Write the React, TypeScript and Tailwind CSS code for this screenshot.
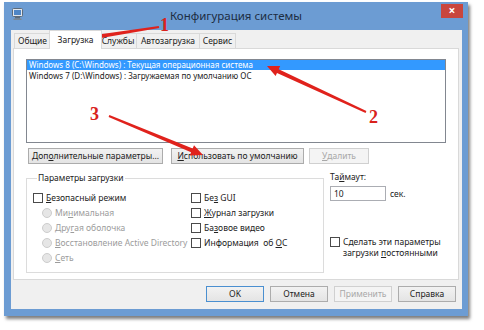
import React from "react";

const ui = { fontFamily: '"Noto Sans", "Liberation Sans", sans-serif' };

function U({ children }: { children: React.ReactNode }) {
  return <span className="underline underline-offset-1">{children}</span>;
}

function Button({
  children,
  className = "",
  disabled = false,
  primary = false,
}: {
  children: React.ReactNode;
  className?: string;
  disabled?: boolean;
  primary?: boolean;
}) {
  const tone = disabled
    ? "border-[#d0d0d0] bg-[#f4f4f4] text-[#a8a8a8]"
    : primary
      ? "border-[#4a8fd0] bg-gradient-to-b from-[#f2f2f2] to-[#e4e4e4] text-[#222]"
      : "border-[#acacac] bg-gradient-to-b from-[#f2f2f2] to-[#e4e4e4] text-[#222]";
  return (
    <div className={`flex h-[16px] shrink-0 items-center justify-center border ${tone} ${className}`}>
      {children}
    </div>
  );
}

function Check({ children }: { children: React.ReactNode }) {
  return (
    <div className="flex h-[15px] items-center gap-[3px]">
      <span className="h-[10px] w-[10px] shrink-0 border border-[#4a4a4a] bg-white" />
      <span>{children}</span>
    </div>
  );
}

function Radio({ children }: { children: React.ReactNode }) {
  return (
    <div className="flex h-[15px] items-center gap-[3px] pl-[9px] text-[#9c9c9c]">
      <span className="h-[10px] w-[10px] shrink-0 rounded-full border border-[#cdcdcd] bg-[#e6e6e6]" />
      <span>{children}</span>
    </div>
  );
}

function Arrow({ x1, y1, x2, y2 }: { x1: number; y1: number; x2: number; y2: number }) {
  const len = Math.hypot(x2 - x1, y2 - y1);
  const dx = (x2 - x1) / len;
  const dy = (y2 - y1) / len;
  const nx = -dy;
  const ny = dx;
  const bx = x2 - dx * 12;
  const by = y2 - dy * 12;
  const p = (x: number, y: number) => `${x.toFixed(1)},${y.toFixed(1)}`;
  const pts = [
    p(x1 + nx * 1, y1 + ny * 1),
    p(bx + nx * 2, by + ny * 2),
    p(bx + nx * 5.5, by + ny * 5.5),
    p(x2, y2),
    p(bx - nx * 5.5, by - ny * 5.5),
    p(bx - nx * 2, by - ny * 2),
    p(x1 - nx * 1, y1 - ny * 1),
  ].join(" ");
  return <polygon points={pts} fill="#e0221c" />;
}

const tabs = ["Общие", "Загрузка", "Службы", "Автозагрузка", "Сервис"];
const tabW = ["w-[37px]", "w-[53px]", "w-[38px]", "w-[64px]", "w-[37px]"];

export default function App() {
  return (
    <div className="relative h-[330px] w-[484px] overflow-hidden bg-white pl-[4px] pt-[2px]" style={ui}>
      {/* window frame */}
      <div className="flex h-[314px] w-[464px] flex-col bg-[#6c9cd3] shadow-[2px_3px_3px_rgba(0,0,0,0.5)]">
        {/* title bar */}
        <div className="grid h-[28px] grid-cols-[1fr_auto_1fr]">
          <div className="pl-[8px] pt-[6px]">
            <svg width="11" height="12" viewBox="0 0 11 12">
              <rect x="0.5" y="0.5" width="10" height="8" rx="1" fill="#dfe6ee" stroke="#5d6b7a" />
              <rect x="2" y="2" width="7" height="5" fill="#4f86c6" />
              <rect x="3" y="9" width="5" height="1.5" fill="#5d6b7a" />
              <rect x="1.5" y="10.5" width="8" height="1.5" fill="#7b8794" />
            </svg>
          </div>
          <div className="pt-[6px] text-[11.5px] leading-[15px] text-[#1d2d42]">Конфигурация системы</div>
          <div className="flex justify-end pr-[5px] pt-[2px]">
            <div className="flex h-[14px] w-[22px] items-center justify-center bg-[#c9463d] text-[12px] font-bold leading-none text-white">
              ×
            </div>
          </div>
        </div>

        {/* client area */}
        <div className="ml-[7px] mr-[6px] flex h-[279px] flex-col bg-[#f0f0f0] text-[8.5px] leading-[10px] text-[#222]">
          {/* tabs */}
          <div className="flex h-[18px] items-end pl-[3px]">
            {tabs.map((t, i) =>
              i === 1 ? (
                <div
                  key={t}
                  className={`relative z-10 -mb-px -ml-[2px] -mr-[2px] flex h-[19px] items-center justify-center border border-b-0 border-[#d9d9d9] bg-white ${tabW[i]}`}
                >
                  {t}
                </div>
              ) : (
                <div
                  key={t}
                  className={`flex h-[15px] items-center justify-center border border-b-0 border-[#d9d9d9] bg-[#f0f0f0] ${tabW[i]} ${i > 1 ? "-ml-px" : ""}`}
                >
                  {t}
                </div>
              )
            )}
          </div>

          {/* tab page */}
          <div className="ml-[2px] mr-[3px] flex h-[232px] flex-col border border-[#d9d9d9] bg-white">
            {/* OS list */}
            <div className="ml-[12px] mt-[10px] h-[84px] w-[420px] border border-[#828790] bg-white text-[8px]">
              <div className="flex h-[10px] items-center bg-[#3399ff] pl-[2px] text-white">
                Windows 8 (C:\Windows) : Текущая операционная система
              </div>
              <div className="flex h-[11px] items-center pl-[2px]">
                Windows 7 (D:\Windows) : Загружаемая по умолчанию ОС
              </div>
            </div>

            {/* list buttons */}
            <div className="ml-[14px] mt-[5px] flex">
              <Button className="w-[135px]">
                Доп<U>о</U>лнительные параметры...
              </Button>
              <Button className="ml-[8px] w-[133px]">
                <U>И</U>спользовать по умолчанию
              </Button>
              <Button disabled className="ml-[5px] w-[60px]">
                <U>У</U>далить
              </Button>
            </div>

            {/* options */}
            <div className="ml-[12px] mt-[8px] flex">
              <fieldset className="h-[101px] w-[298px] border border-[#dcdcdc] pl-[6px]">
                <legend className="ml-[4px] px-[1px] leading-[12px]">Параметры загрузки</legend>
                <div className="mt-[6px] flex">
                  <div className="flex w-[158px] flex-col">
                    <Check>
                      <U>Б</U>езопасный режим
                    </Check>
                    <Radio>
                      Ми<U>н</U>имальная
                    </Radio>
                    <Radio>
                      Дру<U>г</U>ая оболочка
                    </Radio>
                    <Radio>
                      <U>В</U>осстановление Active Directory
                    </Radio>
                    <Radio>
                      <U>С</U>еть
                    </Radio>
                  </div>
                  <div className="flex flex-col">
                    <Check>
                      Бе<U>з</U> GUI
                    </Check>
                    <Check>
                      <U>Ж</U>урнал загрузки
                    </Check>
                    <Check>
                      Ба<U>з</U>овое видео
                    </Check>
                    <Check>
                      Информация &nbsp;об <U>О</U>С
                    </Check>
                  </div>
                </div>
              </fieldset>

              <div className="ml-[6px] flex flex-col">
                <div className="leading-[10px]">
                  Та<U>й</U>маут:
                </div>
                <div className="mt-[4px] flex items-center">
                  <div className="flex h-[15px] w-[56px] items-center border border-[#abadb3] bg-white pl-[3px]">10</div>
                  <span className="ml-[4px]">сек.</span>
                </div>
                <div className="mt-[35px] flex items-start gap-[3px]">
                  <span className="mt-[1px] h-[10px] w-[10px] shrink-0 border border-[#4a4a4a] bg-white" />
                  <span className="leading-[11px]">
                    Сделать эти параметры
                    <br />
                    загрузки <U>п</U>остоянными
                  </span>
                </div>
              </div>
            </div>
          </div>

          {/* dialog buttons */}
          <div className="mt-[6px] flex justify-end gap-[6px] pr-[6px]">
            <Button primary className="w-[58px]">
              OK
            </Button>
            <Button className="w-[58px]">Отмена</Button>
            <Button disabled className="w-[58px]">
              Применить
            </Button>
            <Button className="w-[58px]">Справка</Button>
          </div>
        </div>
      </div>

      {/* annotations */}
      <svg className="pointer-events-none absolute left-0 top-0" width="484" height="330">
        <Arrow x1={159} y1={27} x2={89} y2={38} />
        <Arrow x1={366} y1={112} x2={267} y2={66} />
        <Arrow x1={109} y1={116} x2={203} y2={155} />
      </svg>
      <span
        className="absolute left-[160px] top-[15px] text-[18px] font-bold leading-[20px] text-[#d9221c]"
        style={{ fontFamily: '"Liberation Serif", serif' }}
      >
        1
      </span>
      <span
        className="absolute left-[369px] top-[107px] text-[18px] font-bold leading-[20px] text-[#d9221c]"
        style={{ fontFamily: '"Liberation Serif", serif' }}
      >
        2
      </span>
      <span
        className="absolute left-[90px] top-[104px] text-[18px] font-bold leading-[20px] text-[#d9221c]"
        style={{ fontFamily: '"Liberation Serif", serif' }}
      >
        3
      </span>
    </div>
  );
}
